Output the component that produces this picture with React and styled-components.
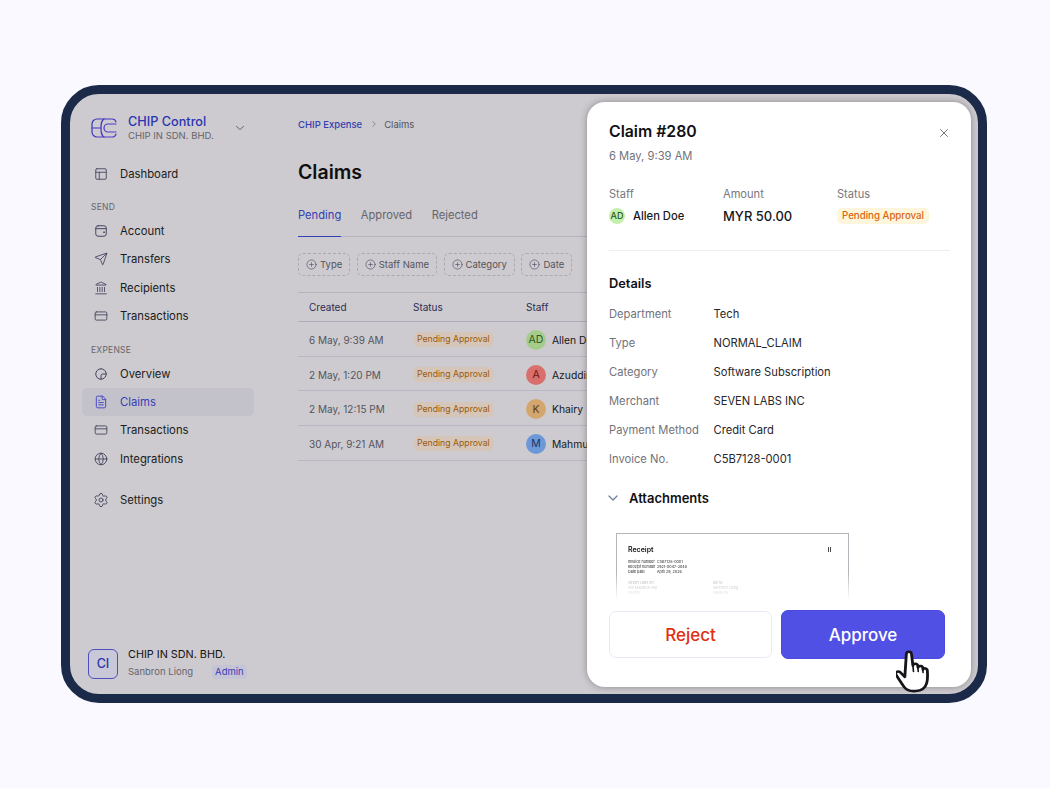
import styled, { createGlobalStyle } from "styled-components";
import {
  PanelsTopLeft,
  Send,
  Landmark,
  CreditCard,
  FileText,
  Globe,
  Settings,
  ChevronDown,
  ChevronRight,
  CirclePlus,
  X,
} from "lucide-react";

const GlobalStyle = createGlobalStyle`
  * { box-sizing: border-box; }
  html, body { margin: 0; height: 100%; }
  body {
    background: #f9f9ff;
    font-family: Inter, "Liberation Sans", sans-serif;
    color: #111114;
    -webkit-font-smoothing: antialiased;
  }
`;

const Page = styled.div`
  width: 1050px;
  height: 788px;
  padding: 85px 63px 85px 61px;
`;

const Frame = styled.div`
  position: relative;
  height: 618px;
  border: 9px solid #1c2a49;
  border-radius: 38px;
  background: #cdcbcf;
  display: flex;
  overflow: hidden;
`;

const Sidebar = styled.aside`
  width: 228px;
  flex: none;
  padding: 15px 0 15px 12px;
  display: flex;
  flex-direction: column;
`;

const Brand = styled.div`
  display: flex;
  align-items: center;
  height: 38px;
  padding-left: 9px;
  gap: 11px;
`;

const BrandText = styled.div`
  display: flex;
  flex-direction: column;
  width: 94px;
  white-space: nowrap;
`;

const BrandName = styled.span`
  font-size: 12.7px;
  line-height: 15px;
  font-weight: 500;
  color: #2a35b0;
`;

const BrandSub = styled.span`
  font-size: 9.5px;
  line-height: 13px;
  color: #66646c;
`;

const BrandChevron = styled.span`
  display: flex;
  color: #55545e;
`;

const Nav = styled.nav`
  display: flex;
  flex-direction: column;
  width: 172px;
  margin-top: ${({ $top }) => $top || 0}px;
`;

const NavLabel = styled.div`
  font-size: 8.5px;
  line-height: 11px;
  letter-spacing: 0.03em;
  color: #66646c;
  padding-left: 9px;
  margin: ${({ $top }) => $top || 0}px 0 3.5px;
`;

const NavItem = styled.div`
  display: flex;
  align-items: center;
  height: 28.4px;
  padding-left: 12px;
  gap: 12px;
  font-size: 11.3px;
  border-radius: 5px;
  color: ${({ $active }) => ($active ? "#3a3cb4" : "#1b1b20")};
  background: ${({ $active }) => ($active ? "#c3c2cb" : "transparent")};
  svg {
    color: ${({ $active }) => ($active ? "#3a3cc4" : "#45445e")};
    flex: none;
  }
`;

const SettingsIcon = styled(Settings)`
  margin: 0 -1px;
`;

const Footer = styled.div`
  margin-top: auto;
  padding-left: 6px;
  display: flex;
  align-items: center;
  gap: 10px;
`;

const OrgBox = styled.div`
  width: 30px;
  height: 30px;
  border: 1px solid #4d4fc0;
  border-radius: 6px;
  background: #c9c8d8;
  color: #2e33a8;
  font-size: 12.5px;
  font-weight: 500;
  display: flex;
  align-items: center;
  justify-content: center;
`;

const OrgText = styled.div`
  display: flex;
  flex-direction: column;
  gap: 3px;
`;

const OrgName = styled.span`
  font-size: 10.8px;
  line-height: 14px;
  color: #111114;
`;

const OrgRow = styled.div`
  display: flex;
  align-items: center;
  gap: 19px;
  font-size: 9.5px;
  line-height: 14px;
  color: #66646c;
`;

const RoleBadge = styled.span`
  padding: 0 3px;
  border-radius: 4px;
  background: #c5c3d6;
  color: #3a3cb4;
`;

const Main = styled.main`
  width: 292px;
  flex: none;
  padding: 23px 0 0;
`;

const Crumbs = styled.div`
  display: flex;
  align-items: center;
  gap: 5px;
  height: 14px;
  font-size: 9.5px;
  color: #55545c;
  svg { color: #66646c; }
`;

const CrumbLink = styled.span`
  color: #3340b0;
  font-weight: 500;
  margin-right: 2px;
`;

const Heading = styled.h1`
  margin: 28px 0 0;
  font-size: 19.5px;
  line-height: 26px;
  font-weight: 600;
  color: #0f0f12;
`;

const Tabs = styled.div`
  margin-top: 15px;
  display: flex;
  gap: 19.5px;
  border-bottom: 1px solid #b5b4bc;
`;

const Tab = styled.div`
  font-size: 11.2px;
  line-height: 14px;
  padding: 8px 0 14px;
  margin-bottom: -1px;
  color: ${({ $active }) => ($active ? "#3340b0" : "#66646c")};
  border-bottom: 1px solid ${({ $active }) => ($active ? "#3340b0" : "transparent")};
`;

const Filters = styled.div`
  display: flex;
  gap: 6.5px;
  margin-top: 16px;
`;

const Filter = styled.div`
  display: flex;
  align-items: center;
  gap: 3px;
  height: 23px;
  padding: 0 7px;
  border: 1px dashed #aaa9b1;
  border-radius: 5px;
  font-size: 9.5px;
  color: #55545c;
  white-space: nowrap;
  svg { color: #45445e; }
`;

const Table = styled.div`
  margin-top: 16px;
  border-top: 1px solid #b5b5c0;
  font-size: 10px;
`;

const Row = styled.div`
  display: grid;
  grid-template-columns: 104px 113px 1fr;
  align-items: center;
  height: ${({ $head }) => ($head ? 29 : 34.7)}px;
  padding: ${({ $head }) => ($head ? 0 : "2px")} 0 0 11px;
  border-bottom: 1px solid ${({ $head }) => ($head ? "#adadba" : "#b8b8c4")};
  color: ${({ $head }) => ($head ? "#2c2c52" : "#55545c")};
`;

const PendingPill = styled.span`
  justify-self: start;
  padding: 0 4px;
  height: 15px;
  border-radius: 6px;
  background: #d6c6b9;
  color: #9a5a0c;
  font-size: 8.7px;
  line-height: 15px;
  white-space: nowrap;
`;

const StaffCell = styled.div`
  display: flex;
  align-items: center;
  gap: 6px;
  font-size: 10.3px;
  color: #17171b;
  white-space: nowrap;
`;

const Avatar = styled.span`
  width: ${({ $size }) => $size || 20}px;
  height: ${({ $size }) => $size || 20}px;
  border-radius: 50%;
  flex: none;
  background: ${({ $bg }) => $bg};
  color: ${({ $fg }) => $fg};
  font-size: ${({ $size }) => ($size ? 9 : 10.5)}px;
  display: flex;
  align-items: center;
  justify-content: center;
`;

const Drawer = styled.section`
  position: absolute;
  top: 8px;
  right: 7px;
  bottom: 7px;
  width: 384px;
  padding: 20px 22px 0;
  background: #fff;
  border-radius: 18px;
  box-shadow: 0 0 7px rgba(60, 58, 62, 0.45);
  overflow: hidden;
`;

const DrawerTitle = styled.h2`
  margin: 0;
  font-size: 15.8px;
  line-height: 20px;
  font-weight: 600;
  color: #101014;
`;

const CloseButton = styled.span`
  position: absolute;
  top: 24px;
  right: 20px;
  display: flex;
  color: #55555e;
`;

const DrawerDate = styled.div`
  margin-top: 7px;
  font-size: 11.2px;
  line-height: 15px;
  color: #72727a;
`;

const Summary = styled.div`
  display: grid;
  grid-template-columns: 114px 114px 1fr;
  margin-top: 23px;
  padding-bottom: 26px;
  margin-right: -1px;
  border-bottom: 1px solid #eeeef4;
`;

const SummaryCol = styled.div`
  display: flex;
  flex-direction: column;
  gap: 6px;
`;

const SummaryLabel = styled.span`
  font-size: 11.1px;
  line-height: 14px;
  color: #76767e;
`;

const SummaryValue = styled.div`
  display: flex;
  align-items: center;
  gap: 8px;
  height: 17px;
  font-size: ${({ $big }) => ($big ? 13 : 11.2)}px;
  font-weight: 500;
  color: #17171b;
`;

const StatusPill = styled.span`
  padding: 0 5px;
  height: 16px;
  border-radius: 5px;
  background: #fef6dc;
  color: #d9660f;
  font-size: 9.7px;
  font-weight: 500;
  line-height: 16px;
  white-space: nowrap;
`;

const SectionTitle = styled.h3`
  margin: 25px 0 7.5px;
  font-size: 12.8px;
  line-height: 16px;
  font-weight: 600;
  color: #101014;
`;

const Details = styled.dl`
  margin: 0;
  display: grid;
  grid-template-columns: 104.5px 1fr;
  grid-auto-rows: 29px;
  align-items: center;
  font-size: 11.2px;
`;

const DetailLabel = styled.dt`
  color: #72727a;
`;

const DetailValue = styled.dd`
  margin: 0;
  color: #27272c;
`;

const AttachHead = styled.div`
  display: flex;
  align-items: center;
  gap: 8px;
  margin-top: 14px;
  height: 20px;
  margin-left: -4px;
  font-size: 13px;
  font-weight: 600;
  color: #101014;
  svg { color: #6a7ca0; }
`;

const Receipt = styled.div`
  margin: 25.5px 0 0 7px;
  width: 233px;
  height: 68px;
  padding: 11px 11px;
  border: 1px solid #b4b4ba;
  border-bottom: 0;
  overflow: hidden;
  mask-image: linear-gradient(#000 58%, transparent 98%);
`;

const ReceiptHead = styled.div`
  display: flex;
  justify-content: space-between;
  align-items: center;
  font-size: 7px;
  font-weight: 600;
  line-height: 9px;
  padding-right: 5px;
`;

const ReceiptMark = styled.span`
  font-size: 6px;
  letter-spacing: 0.5px;
  color: #111;
`;

const ReceiptMeta = styled.div`
  margin-top: 5px;
  font-size: 3.7px;
  line-height: 5px;
  color: #222;
  display: grid;
  grid-template-columns: 29px 1fr;
  white-space: nowrap;
`;

const ReceiptParties = styled.div`
  margin-top: 6px;
  display: grid;
  grid-template-columns: 85px 1fr;
  font-size: 3.7px;
  line-height: 5px;
  color: #999;
  white-space: nowrap;
`;

const Actions = styled.div`
  position: absolute;
  left: 22px;
  right: 26px;
  bottom: 28px;
  display: grid;
  grid-template-columns: 163px 164px;
  gap: 9px;
  align-items: center;
`;

const RejectButton = styled.button`
  height: 47px;
  border: 1.5px solid #e9e9f6;
  border-radius: 7px;
  background: #fff;
  color: #e0300f;
  font: 500 17px Inter, sans-serif;
`;

const ApproveButton = styled.button`
  height: 49px;
  border: 1px solid #4a4ae0;
  border-radius: 7px;
  background: #5050e4;
  color: #fff;
  font: 500 17px Inter, sans-serif;
`;

const Cursor = styled.svg`
  position: absolute;
  left: 826px;
  top: 555px;
`;

const iconProps = { size: 14, strokeWidth: 1.5 };

const LineIcon = ({ children }) => (
  <svg width="14" height="14" viewBox="0 0 24 24" fill="none" stroke="currentColor" strokeWidth="1.7" strokeLinecap="round" strokeLinejoin="round">
    {children}
  </svg>
);

const AccountIcon = () => (
  <LineIcon>
    <rect x="3" y="3" width="18" height="18" rx="4" />
    <path d="M3 8h18" />
    <circle cx="17" cy="14" r="0.6" />
  </LineIcon>
);

const OverviewIcon = () => (
  <LineIcon>
    <path d="M12 3a9 9 0 1 0 9 9" />
    <path d="M12 3a9 9 0 0 1 9 9h-6a3 3 0 0 0-3 3v6" />
  </LineIcon>
);

const Logo = () => (
  <svg width="26" height="20" viewBox="0 0 26 20" fill="none" strokeWidth="1.2" strokeLinecap="round" strokeLinejoin="round">
    <defs>
      <linearGradient id="chipLogo" x1="0" y1="0" x2="26" y2="20" gradientUnits="userSpaceOnUse">
        <stop offset="0" stopColor="#2a35b8" />
        <stop offset="1" stopColor="#6a3ad0" />
      </linearGradient>
    </defs>
    <g stroke="url(#chipLogo)">
      <path d="M25 4a4 4 0 0 0-4-3H6a5 5 0 0 0-5 5v8a5 5 0 0 0 5 5h15a4 4 0 0 0 4-3" />
      <path d="M1 10h9" />
      <path d="M13 1c-3 2-3 5-3 9s0 7 3 9" />
      <path d="M25 6h-8a4 4 0 0 0-4 4 4 4 0 0 0 4 4h8" />
    </g>
  </svg>
);

const sendItems = [
  { label: "Account", icon: <AccountIcon /> },
  { label: "Transfers", icon: <Send {...iconProps} /> },
  { label: "Recipients", icon: <Landmark {...iconProps} /> },
  { label: "Transactions", icon: <CreditCard {...iconProps} /> },
];

const expenseItems = [
  { label: "Overview", icon: <OverviewIcon /> },
  { label: "Claims", icon: <FileText {...iconProps} />, active: true },
  { label: "Transactions", icon: <CreditCard {...iconProps} /> },
  { label: "Integrations", icon: <Globe {...iconProps} /> },
];

const claims = [
  { date: "6 May, 9:39 AM", initials: "AD", name: "Allen Doe", bg: "#a6cc8c", fg: "#2c5a20" },
  { date: "2 May, 1:20 PM", initials: "A", name: "Azuddin", bg: "#d96f6c", fg: "#6e1412" },
  { date: "2 May, 12:15 PM", initials: "K", name: "Khairy", bg: "#d3a66e", fg: "#5f3a10" },
  { date: "30 Apr, 9:21 AM", initials: "M", name: "Mahmud", bg: "#6c98d8", fg: "#16336e" },
];

const details = [
  ["Department", "Tech"],
  ["Type", "NORMAL_CLAIM"],
  ["Category", "Software Subscription"],
  ["Merchant", "SEVEN LABS INC"],
  ["Payment Method", "Credit Card"],
  ["Invoice No.", "C5B7128-0001"],
];

export default function App() {
  return (
    <Page>
      <GlobalStyle />
      <Frame>
        <Sidebar>
          <Brand>
            <Logo />
            <BrandText>
              <BrandName>CHIP Control</BrandName>
              <BrandSub>CHIP IN SDN. BHD.</BrandSub>
            </BrandText>
            <BrandChevron><ChevronDown size={14} strokeWidth={1.5} /></BrandChevron>
          </Brand>

          <Nav $top={13}>
            <NavItem><PanelsTopLeft {...iconProps} />Dashboard</NavItem>
          </Nav>

          <NavLabel $top={14}>SEND</NavLabel>
          <Nav>
            {sendItems.map((item) => (
              <NavItem key={item.label}>{item.icon}{item.label}</NavItem>
            ))}
          </Nav>

          <NavLabel $top={14.5}>EXPENSE</NavLabel>
          <Nav>
            {expenseItems.map((item) => (
              <NavItem key={item.label} $active={item.active}>{item.icon}{item.label}</NavItem>
            ))}
          </Nav>

          <Nav $top={12.5}>
            <NavItem><SettingsIcon size={16} strokeWidth={1.4} />Settings</NavItem>
          </Nav>

          <Footer>
            <OrgBox>CI</OrgBox>
            <OrgText>
              <OrgName>CHIP IN SDN. BHD.</OrgName>
              <OrgRow>
                Sanbron Liong
                <RoleBadge>Admin</RoleBadge>
              </OrgRow>
            </OrgText>
          </Footer>
        </Sidebar>

        <Main>
          <Crumbs>
            <CrumbLink>CHIP Expense</CrumbLink>
            <ChevronRight size={10} strokeWidth={1.5} />
            <span>Claims</span>
          </Crumbs>
          <Heading>Claims</Heading>
          <Tabs>
            <Tab $active>Pending</Tab>
            <Tab>Approved</Tab>
            <Tab>Rejected</Tab>
          </Tabs>
          <Filters>
            {["Type", "Staff Name", "Category", "Date"].map((name) => (
              <Filter key={name}><CirclePlus size={11} strokeWidth={1.3} />{name}</Filter>
            ))}
          </Filters>
          <Table>
            <Row $head>
              <span>Created</span>
              <span>Status</span>
              <span>Staff</span>
            </Row>
            {claims.map((claim) => (
              <Row key={claim.date}>
                <span>{claim.date}</span>
                <PendingPill>Pending Approval</PendingPill>
                <StaffCell>
                  <Avatar $bg={claim.bg} $fg={claim.fg}>{claim.initials}</Avatar>
                  {claim.name}
                </StaffCell>
              </Row>
            ))}
          </Table>
        </Main>

        <Drawer>
          <DrawerTitle>Claim #280</DrawerTitle>
          <CloseButton><X size={14} strokeWidth={1.4} /></CloseButton>
          <DrawerDate>6 May, 9:39 AM</DrawerDate>

          <Summary>
            <SummaryCol>
              <SummaryLabel>Staff</SummaryLabel>
              <SummaryValue>
                <Avatar $size={16} $bg="#c4f0ad" $fg="#2c5a20">AD</Avatar>
                Allen Doe
              </SummaryValue>
            </SummaryCol>
            <SummaryCol>
              <SummaryLabel>Amount</SummaryLabel>
              <SummaryValue $big>MYR 50.00</SummaryValue>
            </SummaryCol>
            <SummaryCol>
              <SummaryLabel>Status</SummaryLabel>
              <SummaryValue><StatusPill>Pending Approval</StatusPill></SummaryValue>
            </SummaryCol>
          </Summary>

          <SectionTitle>Details</SectionTitle>
          <Details>
            {details.map(([label, value]) => (
              <div key={label} style={{ display: "contents" }}>
                <DetailLabel>{label}</DetailLabel>
                <DetailValue>{value}</DetailValue>
              </div>
            ))}
          </Details>

          <AttachHead>
            <ChevronDown size={16} strokeWidth={1.8} />
            Attachments
          </AttachHead>

          <Receipt>
            <ReceiptHead><span>Receipt</span><ReceiptMark>II</ReceiptMark></ReceiptHead>
            <ReceiptMeta>
              <span>Invoice number</span><span>C5B7128-0001</span>
              <span>Receipt number</span><span>2921-0047-3048</span>
              <span>Date paid</span><span>April 29, 2026</span>
            </ReceiptMeta>
            <ReceiptParties>
              <span>Seven Labs Inc</span><span>Bill to</span>
              <span>165 Madison Ave</span><span>Sanbron Liong</span>
              <span>Seattle</span><span>Malaysia</span>
            </ReceiptParties>
          </Receipt>

          <Actions>
            <RejectButton type="button">Reject</RejectButton>
            <ApproveButton type="button">Approve</ApproveButton>
          </Actions>
        </Drawer>

        <Cursor width="36" height="45" viewBox="0 0 33 46" preserveAspectRatio="none">
          <path
            d="M9.5 5c0-3 4.500-3 4.700 0l1.300 12c.2-2.500 4.300-2.500 4.500 .3l.2 1.700c.4-2.300 4.300-2 4.400 .5l.1 1.500c.6-2 4-1.500 4 1 .4 5 .4 9-.6 13-1 4-4.500 7.500-10 8-5 .4-8.500-1-10.500-4-2-3-5.500-9-7.500-12.500-1.500-2.700 1.800-4.800 4-2.500l4 4.500z"
            fill="#fff"
            stroke="#16161a"
            strokeWidth="2.6"
            strokeLinejoin="round"
          />
          <path d="M15.500 17l.5 6M20 19l.4 4M24.600 21l.2 3" stroke="#16161a" strokeWidth="1.500" fill="none" strokeLinecap="round" />
        </Cursor>
      </Frame>
    </Page>
  );
}
